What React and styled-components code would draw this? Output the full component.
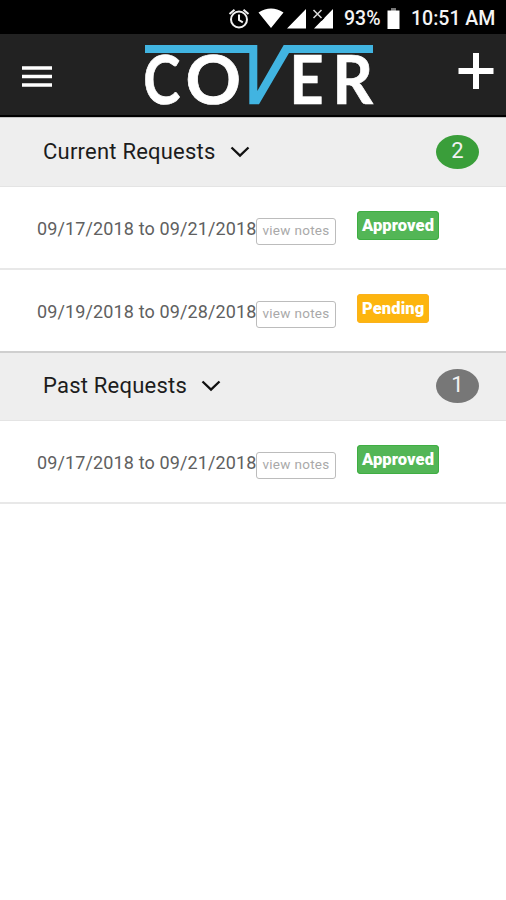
import React from 'react'
import styled, { createGlobalStyle } from 'styled-components'

const colors = {
  bar: '#222222',
  blue: '#41b4e1',
  panel: '#eeeeee',
  line: '#e4e4e4',
  green: '#3a9e3a',
  gray: '#777777',
  approved: '#53b656',
  pending: '#fdb50f',
}

const GlobalStyle = createGlobalStyle`
  body {
    margin: 0;
    background: #fff;
    font-family: Roboto, "Liberation Sans", sans-serif;
  }
  * { box-sizing: border-box; }
`

const Page = styled.div`
  display: flex;
  flex-direction: column;
  width: 100%;
  min-height: 100vh;
  background: white;
`

const StatusBar = styled.div`
  display: flex;
  align-items: center;
  justify-content: flex-end;
  height: 34px;
  padding: 3px 11px 0 0;
  background: #000;
  color: #f4f4f4;
  font-size: 19.5px;
  font-weight: 500;
  white-space: nowrap;
`

const StatusIcons = styled.svg`
  width: 108px;
  height: 24px;
  margin-right: 8px;
`

const BatteryIcon = styled.svg`
  width: 13px;
  height: 22px;
  margin: 0 11px 0 6px;
`

const Percent = styled.span`
  width: 37px;
`

const Clock = styled.span`
  width: 84px;
`

const Header = styled.header`
  display: flex;
  align-items: flex-start;
  justify-content: space-between;
  height: 83px;
  padding: 0 12px 0 21px;
  background: ${colors.bar};
  border-bottom: 2px solid #000;
`

const IconButton = styled.button`
  display: block;
  padding: 0;
  margin-top: ${p => p.$top}px;
  border: 0;
  background: none;
  line-height: 0;
`

const Logo = styled.svg`
  display: block;
  width: 238px;
  height: 80px;
  margin-left: 7px;
  overflow: visible;
`

const LogoLetter = styled.text`
  fill: #fff;
  stroke: #fff;
  stroke-width: 0.7px;
  font-family: Lato, sans-serif;
  font-weight: 700;
  font-size: 66px;
`

const SectionHeader = styled.div`
  display: flex;
  align-items: center;
  height: 70px;
  padding: 0 27px 1px 43px;
  background: ${colors.panel};
  border-top: ${p => (p.$divided ? '2px solid #cfcfcf' : '1px solid #c4c4c4')};
  border-bottom: 1px solid ${colors.line};
`

const SectionTitle = styled.h2`
  margin: 0;
  color: #1c1c1c;
  font-size: 22px;
  font-weight: 400;
  line-height: 26px;
  letter-spacing: 0.22px;
  white-space: nowrap;
`

const Chevron = styled.svg`
  width: 20px;
  height: 12px;
  margin-left: 14px;
`

const Count = styled.span`
  display: flex;
  justify-content: center;
  width: 43px;
  height: 34px;
  margin-left: auto;
  border-radius: 50%;
  background: ${p => p.$color};
  color: #f2f2f2;
  font-size: 22px;
  line-height: 31px;
`

const Row = styled.div`
  display: flex;
  align-items: flex-start;
  height: ${p => (p.$last ? '81px' : '83px')};
  padding: 24px 0 0 37px;
  border-bottom: ${p => (p.$last ? '0' : '2px solid #e8e8e8')};
`

const Dates = styled.span`
  width: 219px;
  margin-top: 7px;
  color: #606060;
  font-size: 18px;
  font-weight: 400;
  line-height: 22px;
  letter-spacing: 0.13px;
  white-space: nowrap;
`

const Notes = styled.button`
  width: 80px;
  height: 27px;
  margin-top: 7px;
  padding: 0;
  border: 1.5px solid #bcbcbc;
  border-radius: 3px;
  background: #fff;
  color: #a9a9a9;
  font-family: inherit;
  font-size: 13.5px;
  line-height: 22px;
  letter-spacing: 0.3px;
  white-space: nowrap;

  span {
    display: block;
    padding-bottom: 3px;
  }
`

const Status = styled.span`
  width: ${p => (p.$pending ? '72px' : '82px')};
  height: 29px;
  margin-left: 21px;
  padding-left: 5px;
  border-radius: 4px;
  background: ${p => (p.$pending ? colors.pending : colors.approved)};
  box-shadow: inset 0 0 0 1px ${p => (p.$pending ? '#fbb11c' : '#3fae43')};
  color: #fff;
  font-size: 16.5px;
  font-weight: 900;
  line-height: 29px;
  letter-spacing: 0.1px;
  white-space: nowrap;
`

const current = [
  { dates: '09/17/2018 to 09/21/2018', status: 'Approved' },
  { dates: '09/19/2018 to 09/28/2018', status: 'Pending' },
]

const past = [{ dates: '09/17/2018 to 09/21/2018', status: 'Approved' }]

const Requests = ({ title, color, items, divided }) => (
  <section>
    <SectionHeader $divided={divided}>
      <SectionTitle>{title}</SectionTitle>
      <Chevron viewBox="0 0 20 12">
        <path d="M1.5 1.5 10 9.7l8.500-8.200" fill="none" stroke="#111" strokeWidth="2.3" />
      </Chevron>
      <Count $color={color}>{items.length}</Count>
    </SectionHeader>
    {items.map((item, i) => (
      <Row key={item.dates} $last={!divided && i === items.length - 1}>
        <Dates>{item.dates}</Dates>
        <Notes>
          <span>view notes</span>
        </Notes>
        <Status $pending={item.status === 'Pending'}>{item.status}</Status>
      </Row>
    ))}
  </section>
)

const App = () => (
  <Page>
    <GlobalStyle />
    <StatusBar>
      <StatusIcons viewBox="228 5 108 24">
        <g fill="none" stroke="#f0f0f0" strokeWidth="2">
          <circle cx="239" cy="17.500" r="8" />
          <path d="M239 12.500v5.500l3.800 2.300M229.500 12l5-4.300M248.500 12l-5-4.300" />
        </g>
        <path fill="#fff" d="M258.500 10.500Q271 2.500 283.500 10.500L271 26ZM306 7v19.500h-19ZM333 7v19.500h-19Z" />
        <path d="m312.500 7 10.500 10.500M323 7l-10.500 10.500" stroke="#000" strokeWidth="4" />
        <path d="m313.500 8 8 8m0-8-8 8" stroke="#ddd" strokeWidth="1.500" />
      </StatusIcons>
      <Percent>93%</Percent>
      <BatteryIcon viewBox="0 0 13 22">
        <path fill="#777" d="M4 0h5v3H4z" />
        <path fill="#fff" d="M0.500 2.500h12V21h-12z" />
      </BatteryIcon>
      <Clock>10:51 AM</Clock>
    </StatusBar>
    <Header>
      <IconButton $top={31} aria-label="Menu">
        <svg width="32" height="24" viewBox="0 0 32 24">
          <path d="M1 3h30M1 11.500h30M1 20h30" stroke="#fff" strokeWidth="3.600" />
        </svg>
      </IconButton>
      <Logo viewBox="140 34 238 80">
        <LogoLetter x="143.300" y="104" textLength="37" lengthAdjust="spacingAndGlyphs">C</LogoLetter>
        <LogoLetter x="185.500" y="104" textLength="55.500" lengthAdjust="spacingAndGlyphs">O</LogoLetter>
        <LogoLetter x="289.500" y="104" textLength="34" lengthAdjust="spacingAndGlyphs">E</LogoLetter>
        <LogoLetter x="332.500" y="104" textLength="40.500" lengthAdjust="spacingAndGlyphs">R</LogoLetter>
        <path
          fill={colors.blue}
          d="M145 45H257.300V91L283.700 45H373V53H289L259 104.300H249.300V53H145Z"
        />
      </Logo>
      <IconButton $top={18} aria-label="Add">
        <svg width="36" height="38" viewBox="0 0 36 38">
          <path d="M18 1v36M0.500 19h35" stroke="#fff" strokeWidth="6" />
        </svg>
      </IconButton>
    </Header>
    <Requests title="Current Requests" color={colors.green} items={current} />
    <Requests title="Past Requests" color={colors.gray} items={past} divided />
  </Page>
)

export default App
